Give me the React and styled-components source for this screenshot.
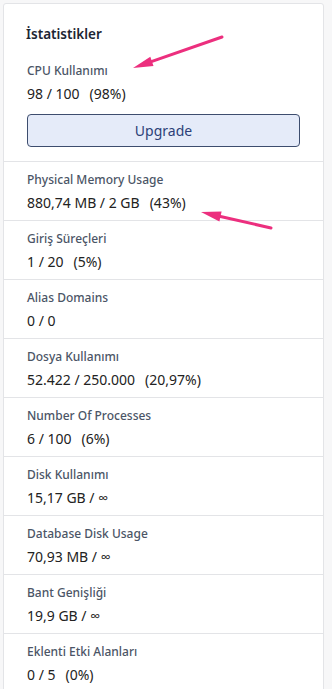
import React from "react";
import styled, { createGlobalStyle } from "styled-components";

const GlobalStyle = createGlobalStyle`
    html, body {
        margin: 0;
        padding: 0;
        background-color: #f7f7f8;
        font-family: "Noto Sans", "Open Sans", sans-serif;
    }
`;

const Page = styled.div`
    position: relative;
    width: 332px;
    height: 689px;
    overflow: hidden;
    padding: 3px 8px 0 3px;
    box-sizing: border-box;
`;

const Card = styled.div`
    background-color: #ffffff;
    border: 1px solid #e3e4e7;
    border-radius: 3px;
    padding-top: 20px;
`;

const CardTitle = styled.h3`
    margin: 0 23px 19px 22px;
    font-size: 13.5px;
    line-height: 20px;
    font-weight: 600;
    color: #1c2533;
`;

const StatRow = styled.div`
    display: flex;
    flex-direction: column;
    gap: 6px;
    padding: ${(p) => (p.$first ? "0 23px 14px" : "10px 23px 9px")};
    border-top: ${(p) => (p.$first ? "none" : "1px solid #e3e4e7")};
`;

const StatLabel = styled.div`
    font-size: 12px;
    line-height: 16px;
    font-weight: 500;
    color: #4b5566;
`;

const StatValue = styled.div`
    font-size: 14px;
    line-height: 17px;
    color: #222222;
`;

const Percent = styled.span`
    margin-left: 10px;
`;

const UpgradeButton = styled.button`
    margin-top: 6px;
    height: 33px;
    width: 100%;
    background-color: #e5ebf9;
    border: 1px solid #3d4d6e;
    border-radius: 4px;
    color: #2d3f78;
    font-family: inherit;
    font-size: 14px;
    cursor: pointer;
`;

const Overlay = styled.svg`
    position: absolute;
    top: 0;
    left: 0;
    pointer-events: none;
`;

const stats = [
    { label: "Physical Memory Usage", value: "880,74 MB / 2 GB", pct: "(43%)" },
    { label: "Giriş Süreçleri", value: "1 / 20", pct: "(5%)" },
    { label: "Alias Domains", value: "0 / 0" },
    { label: "Dosya Kullanımı", value: "52.422 / 250.000", pct: "(20,97%)" },
    { label: "Number Of Processes", value: "6 / 100", pct: "(6%)" },
    { label: "Disk Kullanımı", value: "15,17 GB / ∞" },
    { label: "Database Disk Usage", value: "70,93 MB / ∞" },
    { label: "Bant Genişliği", value: "19,9 GB / ∞" },
    { label: "Eklenti Etki Alanları", value: "0 / 5", pct: "(0%)" },
];

const Arrow = ({ x1, y1, x2, y2, head }) => (
    <g>
        <line x1={x1} y1={y1} x2={x2} y2={y2} stroke="#ec2f7e" strokeWidth="3" strokeLinecap="round" />
        <polygon points={head} fill="#ec2f7e" />
    </g>
);

const App = () => (
    <Page>
        <GlobalStyle />
        <Card>
            <CardTitle>İstatistikler</CardTitle>
            <StatRow $first>
                <StatLabel>CPU Kullanımı</StatLabel>
                <StatValue>
                    98 / 100<Percent>(98%)</Percent>
                </StatValue>
                <UpgradeButton>Upgrade</UpgradeButton>
            </StatRow>
            {stats.map((s) => (
                <StatRow key={s.label}>
                    <StatLabel>{s.label}</StatLabel>
                    <StatValue>
                        {s.value}
                        {s.pct && <Percent>{s.pct}</Percent>}
                    </StatValue>
                </StatRow>
            ))}
        </Card>
        <Overlay width="332" height="689" viewBox="0 0 332 689">
            <Arrow x1={222} y1={37} x2={152} y2={61.4} head="133,68 153.5,66.1 150.3,56.7" />
            <Arrow x1={271} y1={228} x2={220.5} y2={216.5} head="201,212 221.6,211.6 219.4,221.4" />
        </Overlay>
    </Page>
);

export default App;
